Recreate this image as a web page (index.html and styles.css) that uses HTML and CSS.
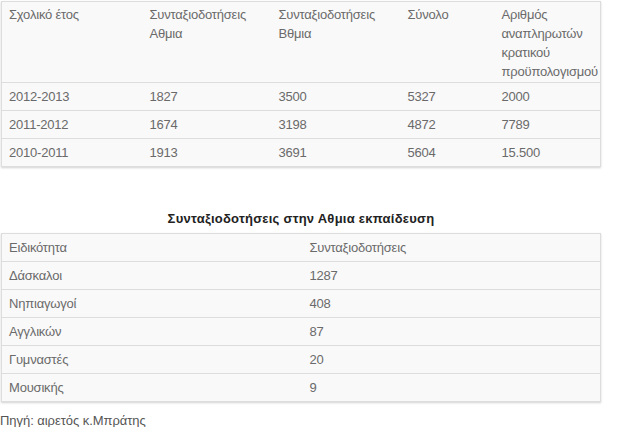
FILE: index.html
```html
<!DOCTYPE html>
<html lang="el">
<head>
<meta charset="utf-8">
<title>Συνταξιοδοτήσεις</title>
<link rel="stylesheet" href="styles.css">
</head>
<body>
<div class="page">
  <table class="grid grid-years">
    <colgroup>
      <col class="c1"><col class="c2"><col class="c3"><col class="c4"><col class="c5">
    </colgroup>
    <thead>
      <tr>
        <th>Σχολικό έτος</th>
        <th>Συνταξιοδοτήσεις Αθμια</th>
        <th>Συνταξιοδοτήσεις Βθμια</th>
        <th>Σύνολο</th>
        <th>Αριθμός αναπληρωτών κρατικού προϋπολογισμού</th>
      </tr>
    </thead>
    <tbody>
      <tr><td>2012-2013</td><td>1827</td><td>3500</td><td>5327</td><td>2000</td></tr>
      <tr><td>2011-2012</td><td>1674</td><td>3198</td><td>4872</td><td>7789</td></tr>
      <tr><td>2010-2011</td><td>1913</td><td>3691</td><td>5604</td><td>15.500</td></tr>
    </tbody>
  </table>

  <h3 class="caption">Συνταξιοδοτήσεις στην Αθμια εκπαίδευση</h3>

  <table class="grid grid-spec">
    <colgroup>
      <col class="s1"><col class="s2">
    </colgroup>
    <thead>
      <tr><th>Ειδικότητα</th><th>Συνταξιοδοτήσεις</th></tr>
    </thead>
    <tbody>
      <tr><td>Δάσκαλοι</td><td>1287</td></tr>
      <tr><td>Νηπιαγωγοί</td><td>408</td></tr>
      <tr><td>Αγγλικών</td><td>87</td></tr>
      <tr><td>Γυμναστές</td><td>20</td></tr>
      <tr><td>Μουσικής</td><td>9</td></tr>
    </tbody>
  </table>

  <p class="source">Πηγή: αιρετός κ.Μπράτης</p>
</div>
</body>
</html>
```
FILE: styles.css
```css
html, body {
  margin: 0;
  padding: 0;
  background: #ffffff;
}

body {
  font-family: "Liberation Sans", Arial, sans-serif;
  font-size: 13px;
  line-height: 19px;
  letter-spacing: -0.2px;
  color: #6a6a6a;
}

.page {
  width: 600px;
  padding: 1px 0 0 1px;
}

.grid {
  width: 600px;
  border-collapse: collapse;
  table-layout: fixed;
  background: #f9f9f9;
  border: 1px solid #dddddd;
  box-shadow: 0 1px 2px rgba(0, 0, 0, 0.18);
}

.grid th,
.grid td {
  text-align: left;
  vertical-align: top;
  font-weight: normal;
  padding: 4px 6px 4px 7px;
  border-top: 1px solid #dddddd;
}

.grid thead th {
  padding-top: 3px;
  padding-bottom: 1px;
}

.grid-spec thead th {
  padding-top: 4px;
  padding-bottom: 4px;
}

.c1 { width: 141px; }
.c2 { width: 129px; }
.c3 { width: 129px; }
.c4 { width: 94px; }
.c5 { width: auto; }

.s1 { width: 301px; }
.s2 { width: auto; }

.caption {
  margin: 42px 0 0 0;
  padding: 0 0 5px 0;
  text-align: center;
  font-size: 13px;
  line-height: 19px;
  font-weight: bold;
  letter-spacing: 0.25px;
  color: #222222;
}

.source {
  margin: 9px 0 0 -1px;
  letter-spacing: -0.05px;
  color: #555555;
}
```
